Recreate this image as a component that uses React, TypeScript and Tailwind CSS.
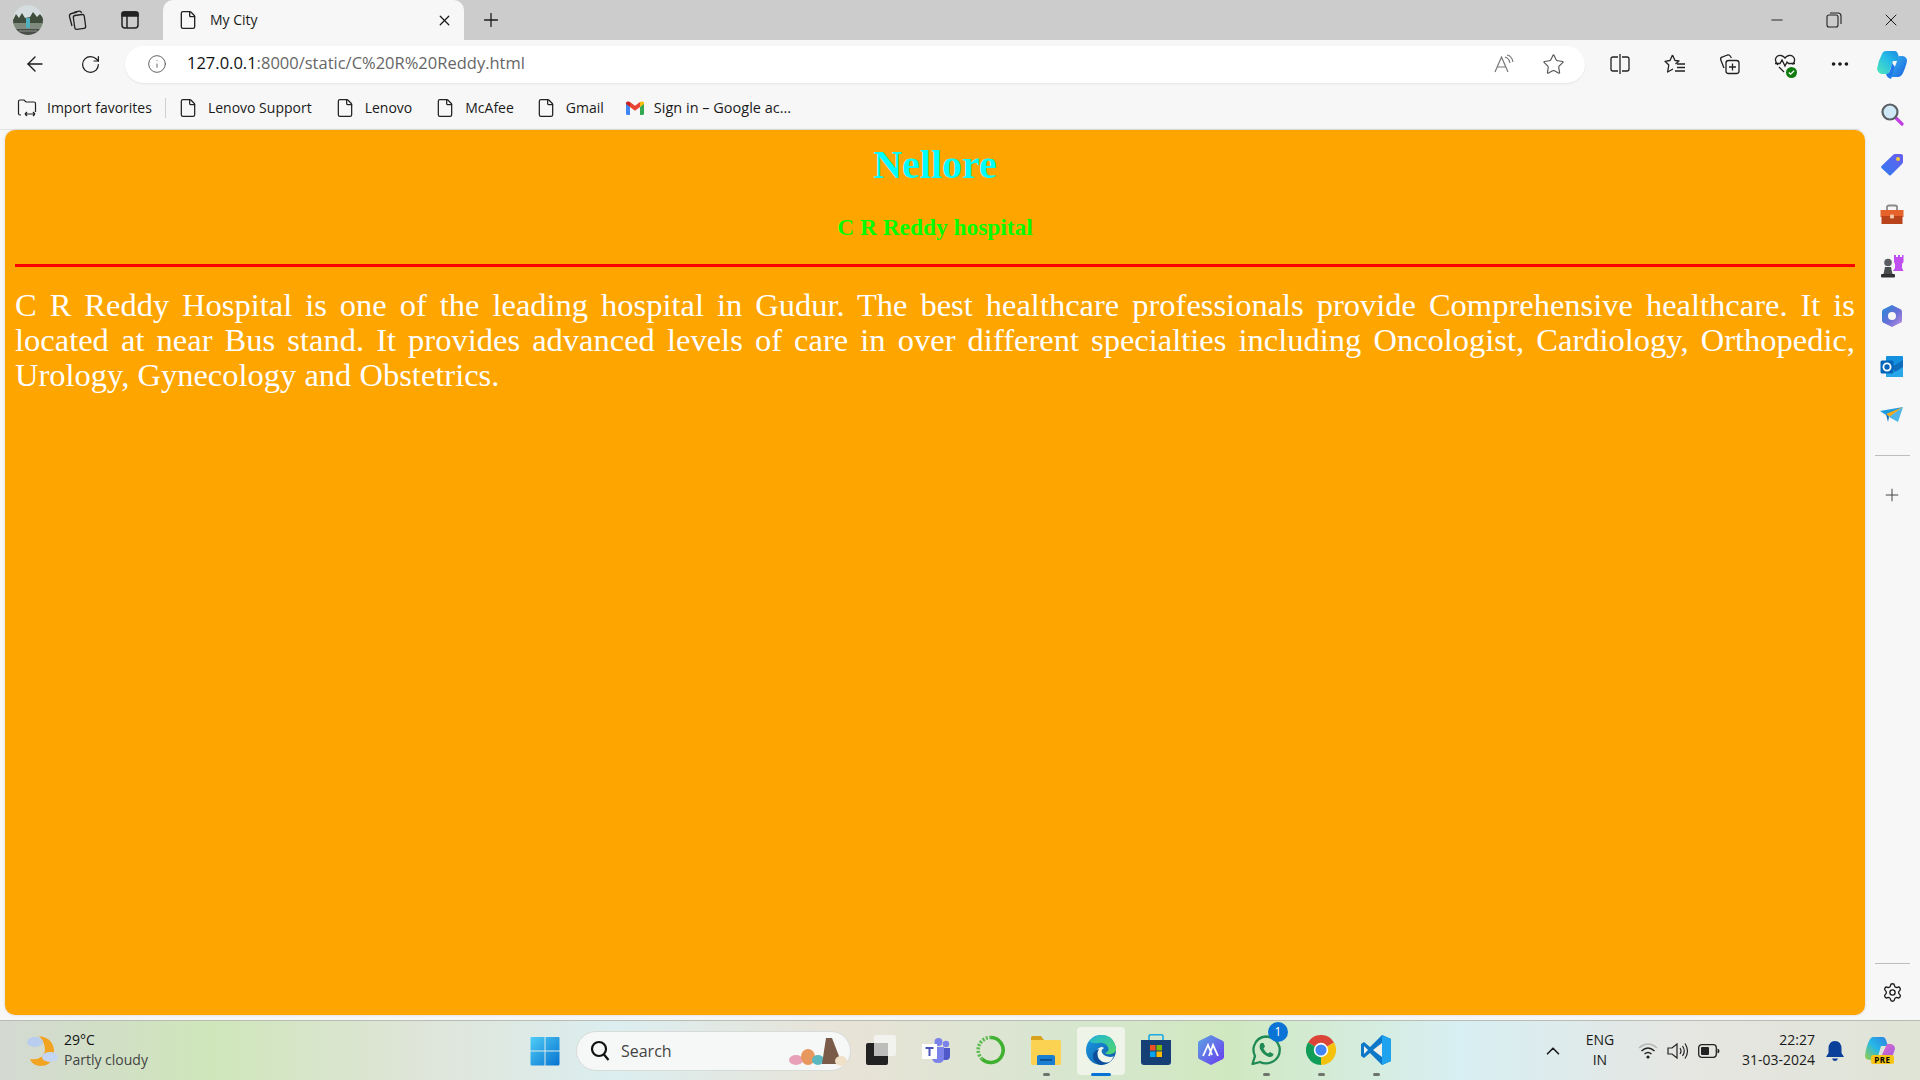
import React from 'react';
import { ArrowLeft, RotateCw, Info, Star, Plus, X, Minus, Ellipsis, File, Settings, ChevronUp } from 'lucide-react';

const sans = "font-['Open_Sans','Noto_Sans',sans-serif]";

const Avatar = () => (
  <svg width="30" height="30" viewBox="0 0 30 30">
    <defs>
      <clipPath id="av"><circle cx="15" cy="15" r="15" /></clipPath>
    </defs>
    <g clipPath="url(#av)">
      <rect width="30" height="30" fill="#d5dcdf" />
      <path d="M0 15 L3 9 L6 13 L9 8 L12 13 L17 12 L20 7 L24 12 L27 9 L30 13 V19 H0Z" fill="#3f4d3c" />
      <rect y="18" width="30" height="12" fill="#7f8a7c" />
      <rect x="13" y="13" width="4" height="10" fill="#4fb0c0" />
      <path d="M0 24 H30 V30 H0Z" fill="#4a4f49" />
      <path d="M6 26 H24" stroke="#8b8f88" strokeWidth="1" />
    </g>
  </svg>
);

const CollectionsIcon = () => (
  <svg width="22" height="22" viewBox="0 0 22 22" fill="none" stroke="#222" strokeWidth="1.3">
    <rect x="8" y="6" width="11" height="14" rx="2" transform="rotate(-8 13 13)" />
    <path d="M6 17 L3.5 7.5 Q3 5 5.5 4.5 L11 3.2" />
    <path d="M8 3.5 L13 2.2 Q15 2 15.6 4" />
  </svg>
);

const TabsIcon = () => (
  <svg width="20" height="20" viewBox="0 0 20 20" fill="none" stroke="#222" strokeWidth="1.5">
    <rect x="2" y="2" width="16" height="16" rx="3" />
    <path d="M2 3.5 Q2 2 4 2 H16 Q18 2 18 3.5 V6 H2Z" fill="#222" />
    <path d="M7 6 V18" />
  </svg>
);

const ImportIcon = () => (
  <svg width="20" height="20" viewBox="0 0 20 20" fill="none" stroke="#222" strokeWidth="1.2">
    <path d="M4 17 H3 Q1.5 17 1.5 15.5 V3.5 Q1.5 2 3 2 H7 L9 4 H17 Q18.5 4 18.5 5.5 V14" />
    <path d="M8 16 H18 M8 16 L10 14 M8 16 L10 18 M18 16 L16 14 M18 16 L16 18" />
  </svg>
);

const ReadAloudIcon = () => (
  <svg width="22" height="22" viewBox="0 0 22 22" fill="none" stroke="#777" strokeWidth="1.2">
    <path d="M2 19 L8.5 4 L15 19 M4.5 14 H12.5" />
    <path d="M12 4 Q16 5 17 10 M14 2 Q19 3 20 9" />
  </svg>
);

const SplitIcon = () => (
  <svg width="20" height="22" viewBox="0 0 20 22" fill="none" stroke="#222" strokeWidth="1.3">
    <path d="M8 4 H3 Q1 4 1 6 V16 Q1 18 3 18 H8" />
    <path d="M12 4 H17 Q19 4 19 6 V16 Q19 18 17 18 H12" />
    <path d="M10 1 V21" />
  </svg>
);

const FavoritesIcon = () => (
  <svg width="22" height="22" viewBox="0 0 22 22" fill="none" stroke="#222" strokeWidth="1.3">
    <path d="M8.5 2 L11 7.5 L15 8 L11.5 11 M8.5 2 L6 7.5 L1 8.3 L4.8 12 L3.6 19 L9 16" strokeLinejoin="round" />
    <path d="M13 11 H21 M13 14.5 H21 M11 18 H21" />
  </svg>
);

const CollectAddIcon = () => (
  <svg width="22" height="22" viewBox="0 0 22 22" fill="none" stroke="#222" strokeWidth="1.3">
    <rect x="7" y="7.5" width="13" height="13" rx="2.5" />
    <path d="M13.5 10.5 V17.5 M10 14 H17" />
    <path d="M5 15 L1.8 7 Q1 5 3 4.2 L8.5 2 Q10.5 1.5 11.5 3.5 L12.5 5" />
  </svg>
);

const HeartIcon = () => (
  <span className="relative block w-[22px] h-[22px]">
    <svg width="22" height="22" viewBox="0 0 22 22" fill="none" stroke="#222" strokeWidth="1.3">
      <path d="M4 12 Q1 9 1.5 6 Q3 2 7 2.5 Q9.5 3 11 5 Q12.5 3 15 2.5 Q19 2 20.5 6 Q21 9 18.5 11.5" />
      <path d="M1 10.5 H6 L8 7 L11 13 L13 9 L14.5 10.5 H21" />
      <path d="M5 14 L10 19" />
    </svg>
    <span className="absolute right-[-1px] bottom-[-3px] w-[11px] h-[11px] rounded-full bg-[#107c10] flex items-center justify-center">
      <svg width="7" height="7" viewBox="0 0 8 8" fill="none" stroke="#fff" strokeWidth="1.4"><path d="M1 4 L3 6 L7 2" /></svg>
    </span>
  </span>
);

const CopilotIcon = () => (
  <svg width="30" height="30" viewBox="0 0 30 30">
    <defs>
      <linearGradient id="cpA" x1="0" y1="0" x2="1" y2="1">
        <stop offset="0" stopColor="#38b8ee" />
        <stop offset="1" stopColor="#1a5fe0" />
      </linearGradient>
      <linearGradient id="cpB" x1="0" y1="1" x2="1" y2="0">
        <stop offset="0" stopColor="#4fe8b8" />
        <stop offset="0.55" stopColor="#26bce8" />
        <stop offset="1" stopColor="#1b86e0" />
      </linearGradient>
    </defs>
    <path d="M9 2 H18 Q20 2 21 5 L23 12 H16 L12 24 Q11 25 8 25 H6 Q1 25 0 20 Q1 12 5 5 Q6 2 9 2Z" fill="url(#cpB)" />
    <path d="M14 28 H21 Q24 28 26 24 Q30 15 30 11 Q29 7 25 7 H22 L14 28Z" fill="url(#cpA)" />
    <path d="M12 24 Q14 20 15 14 L18 18 L14 30 Q10 29 9 25Z" fill="#1f7ae8" />
  </svg>
);

const MagnifierIcon = () => (
  <svg width="24" height="24" viewBox="0 0 24 24">
    <path d="M15 15 L22 22" stroke="#c03fe0" strokeWidth="3.2" strokeLinecap="round" />
    <circle cx="10" cy="10" r="7.5" fill="#cfe8f7" stroke="#5a5f63" strokeWidth="2.2" />
  </svg>
);

const TagIcon = () => (
  <svg width="24" height="24" viewBox="0 0 24 24">
    <defs>
      <linearGradient id="tagG" x1="0" y1="1" x2="1" y2="0">
        <stop offset="0" stopColor="#2f7cf0" />
        <stop offset="1" stopColor="#6a5cf0" />
      </linearGradient>
    </defs>
    <path d="M1.5 13 L13 2 Q14 1 15 1 H21 Q23 1 23 3 V9 Q23 10 22 11 L11 22 Q10 23 9 22 L1.5 15 Q0.5 14 1.5 13Z" fill="url(#tagG)" />
    <circle cx="18" cy="6" r="2" fill="#f4c93a" />
  </svg>
);

const ToolboxIcon = () => (
  <svg width="24" height="22" viewBox="0 0 24 22">
    <path d="M7 6 V3 Q7 1.5 9 1.5 H15 Q17 1.5 17 3 V6" fill="none" stroke="#8a8a8a" strokeWidth="1.8" />
    <rect x="0.5" y="6" width="23" height="7" fill="#e5622b" />
    <rect x="1.5" y="12" width="21" height="8" fill="#b9431a" />
    <rect x="10" y="10.5" width="4" height="4" rx="1" fill="#f2c6a8" />
  </svg>
);

const ChessIcon = () => (
  <svg width="24" height="24" viewBox="0 0 24 24">
    <path d="M14 1 H16 V3 H18 V1 H20 V3 H22 V1 H23.5 V8 L22 10 V14 L23.5 17 H13 L15 14 V10 L14 8Z" fill="#c04ff0" />
    <circle cx="8" cy="8.5" r="3.8" fill="#5b5f63" />
    <path d="M5 13 H11 L12.5 20 H3.5Z" fill="#4a4d50" />
    <rect x="1" y="20" width="14" height="3.5" rx="1" fill="#2f3133" />
  </svg>
);

const M365Icon = () => (
  <svg width="24" height="24" viewBox="0 0 24 24">
    <defs>
      <linearGradient id="m365" x1="0" y1="0" x2="1" y2="1">
        <stop offset="0" stopColor="#1e8ad8" />
        <stop offset="0.55" stopColor="#6a6fd6" />
        <stop offset="1" stopColor="#c090e4" />
      </linearGradient>
    </defs>
    <path d="M12 1 L21 5.5 Q22 6 22 8 V16 Q22 18 21 18.5 L12 23 L3 18.5 Q2 18 2 16 V8 Q2 6 3 5.5Z" fill="url(#m365)" />
    <circle cx="12" cy="12" r="4" fill="#f6f6f6" />
  </svg>
);

const OutlookIcon = () => (
  <svg width="24" height="24" viewBox="0 0 24 24">
    <rect x="6" y="1" width="17" height="21" rx="1" fill="#1490df" />
    <path d="M6 12 H23 V22 H6Z" fill="#28a8ea" />
    <path d="M12 12 L23 5 V12 L15 17Z" fill="#0f6cbd" />
    <rect x="0.5" y="5.5" width="13" height="13" rx="1.5" fill="#0364b8" />
    <circle cx="7" cy="12" r="3.6" fill="none" stroke="#fff" strokeWidth="1.8" />
  </svg>
);

const SendIcon = () => (
  <svg width="24" height="22" viewBox="0 0 24 22">
    <path d="M0 5 L23 1 L9 11Z" fill="#1d9be0" />
    <path d="M6 8 L23 1 L10 11Z" fill="#f2a81f" />
    <path d="M9 11 L23 1 L18 16Z" fill="#4fb6ec" />
    <path d="M6 8 L9 11 L8 16Z" fill="#0f6cbd" />
  </svg>
);

const GmailIcon = () => (
  <svg width="18" height="14" viewBox="0 0 18 14">
    <path d="M0 2 V12.5 Q0 14 1.5 14 H4 V6Z" fill="#4285f4" />
    <path d="M18 2 V12.5 Q18 14 16.5 14 H14 V6Z" fill="#34a853" />
    <path d="M14 1 V6 L18 3 V2 Q18 0 15.5 0.5Z" fill="#fbbc04" />
    <path d="M4 1 V6 L9 9.7 L14 6 V1 L9 4.8Z" fill="#ea4335" />
    <path d="M0 2 V3 L4 6 V1 L2.5 0.5 Q0 0 0 2Z" fill="#c5221f" />
  </svg>
);

const WeatherIcon = () => (
  <svg width="32" height="36" viewBox="0 0 32 36">
    <path d="M12 3 Q27 5 27 19 Q26 33 13 33 Q5 32 3 26 Q15 28 18 18 Q18 9 12 3Z" fill="#f3a322" />
    <ellipse cx="8" cy="9" rx="8" ry="5" fill="#b9cdee" />
    <ellipse cx="23" cy="24" rx="8" ry="5" fill="#c4d6f4" />
  </svg>
);

const WindowsIcon = () => (
  <svg width="30" height="30" viewBox="0 0 30 30">
    <defs>
      <linearGradient id="win" x1="0" y1="0" x2="1" y2="1">
        <stop offset="0" stopColor="#4fcdf7" />
        <stop offset="1" stopColor="#0672d0" />
      </linearGradient>
    </defs>
    <path d="M1 1 H14.5 V14.5 H0.5 V2 Q0.5 1 1 1Z M15.5 1 H29 Q29.5 1 29.5 2 V14.5 H15.5Z M0.5 15.5 H14.5 V29.5 H1.5 Q0.5 29.5 0.5 28Z M15.5 15.5 H29.5 V28 Q29.5 29.5 28 29.5 H15.5Z" fill="url(#win)" />
  </svg>
);

const SearchGlass = () => (
  <svg width="20" height="22" viewBox="0 0 20 22" fill="none" stroke="#111" strokeWidth="2.2">
    <circle cx="9" cy="9" r="7" />
    <path d="M14 14.5 L18.5 20" />
  </svg>
);

const SearchArt = () => (
  <svg width="62" height="32" viewBox="0 0 62 32">
    <ellipse cx="8" cy="25" rx="7" ry="5" fill="#e8a0b8" />
    <ellipse cx="20" cy="22" rx="7" ry="8" fill="#e8975f" />
    <ellipse cx="30" cy="25" rx="6" ry="5" fill="#5cb8c0" />
    <path d="M38 3 L44 3 L54 29 H34Z" fill="#7a5a48" />
    <ellipse cx="53" cy="26" rx="6" ry="5" fill="#f0e0c8" />
  </svg>
);

const TaskViewIcon = () => (
  <svg width="30" height="30" viewBox="0 0 30 30">
    <rect x="0" y="8" width="22" height="22" rx="2" fill="#222" />
    <rect x="8" y="0" width="22" height="21" rx="2" fill="#f4f4f2" opacity="0.85" />
    <rect x="8" y="8" width="14" height="13" fill="#bdbdbb" />
  </svg>
);

const TeamsIcon = () => (
  <svg width="28" height="28" viewBox="0 0 28 28">
    <circle cx="24" cy="8" r="3.2" fill="#7b83eb" />
    <circle cx="16.5" cy="6" r="4" fill="#7b83eb" />
    <path d="M21 12 H28 V20 Q28 24 24 24 H21Z" fill="#5059c9" />
    <path d="M10 11 H22 V22 Q22 27 16 27 Q10 27 10 21Z" fill="#7b83eb" />
    <rect x="0" y="8" width="15" height="15" fill="#fff" />
    <path d="M3.5 11 H11.5 V13 H8.5 V20 H6.5 V13 H3.5Z" fill="#4b53bc" />
  </svg>
);

const RingIcon = () => (
  <svg width="30" height="30" viewBox="0 0 30 30" fill="none">
    <path d="M15 2.5 A12.5 12.5 0 1 1 6 24" stroke="#3fb02f" strokeWidth="3.6" />
    <path d="M6 24 A12.5 12.5 0 0 1 15 2.5" stroke="#5cba4f" strokeWidth="3.6" strokeDasharray="2 1.5" />
  </svg>
);

const ExplorerIcon = () => (
  <svg width="30" height="30" viewBox="0 0 30 30">
    <path d="M0 3 Q0 1 2 1 H10 L13 5 H0Z" fill="#d9a21b" />
    <rect x="0" y="5" width="30" height="25" rx="1.5" fill="#fbd251" />
    <path d="M6 30 V22 Q6 20 8 20 H22 Q24 20 24 22 V30Z" fill="#1a7fd0" />
    <rect x="9" y="24" width="12" height="1.8" fill="#0b4f8f" />
  </svg>
);

const EdgeIcon = () => (
  <svg width="30" height="30" viewBox="0 0 30 30">
    <defs>
      <linearGradient id="edgeA" x1="0" y1="0" x2="1" y2="1">
        <stop offset="0" stopColor="#1fb5d8" />
        <stop offset="1" stopColor="#53d86a" />
      </linearGradient>
      <linearGradient id="edgeB" x1="0" y1="0" x2="1" y2="1">
        <stop offset="0" stopColor="#1b9de2" />
        <stop offset="1" stopColor="#0f55a8" />
      </linearGradient>
    </defs>
    <circle cx="15" cy="15" r="15" fill="url(#edgeB)" />
    <path d="M3 6 Q9 0 16 0 Q28 0 30 14 Q30 18 25 19 Q21 20 19 18 Q24 16 22 12 Q19 7 12 8 Q6 9 3 6Z" fill="url(#edgeA)" />
    <path d="M13 13 Q16 11 18 13 Q16 14 15.5 16 Q16 21 24 22 Q27 22 28 21 Q24 30 14 29 Q9 27 9 20 Q9 16 13 13Z" fill="#f1f6ea" />
    <path d="M13 14 Q10 19 13 24 Q17 29 24 27 Q20 30 15 30 Q6 28 7 19 Q9 15 13 14Z" fill="#0c4f9c" />
  </svg>
);

const StoreIcon = () => (
  <svg width="30" height="32" viewBox="0 0 30 32">
    <path d="M8 6 V2 Q8 0.8 9.5 0.8 H20.5 Q22 0.8 22 2 V6" fill="none" stroke="#1fa8e0" strokeWidth="1.6" />
    <path d="M0 6 H30 V28 Q30 31 27 31 H3 Q0 31 0 28Z" fill="#163f75" />
    <rect x="9" y="11" width="5.5" height="5.5" fill="#f25022" />
    <rect x="15.5" y="11" width="5.5" height="5.5" fill="#7fba00" />
    <rect x="9" y="17.5" width="5.5" height="5.5" fill="#00a4ef" />
    <rect x="15.5" y="17.5" width="5.5" height="5.5" fill="#ffb900" />
  </svg>
);

const HexIcon = () => (
  <svg width="30" height="30" viewBox="0 0 30 30">
    <defs>
      <linearGradient id="hexG" x1="0" y1="0" x2="1" y2="1">
        <stop offset="0" stopColor="#5ba4e0" />
        <stop offset="1" stopColor="#6a3bf0" />
      </linearGradient>
    </defs>
    <path d="M15 0 L27 6 Q28 7 28 8 V22 Q28 23 27 24 L15 30 L3 24 Q2 23 2 22 V8 Q2 7 3 6Z" fill="url(#hexG)" />
    <path d="M7 21 L12 10 L16 20 M13 21 L17 10 L22 21" fill="none" stroke="#fff" strokeWidth="1.8" />
  </svg>
);

const WhatsappIcon = () => (
  <svg width="30" height="30" viewBox="0 0 30 30" fill="none">
    <path d="M1.5 29 L4 21 Q1.5 16 3 11 Q6 2 15 1.5 Q25 2 28.5 12 Q30 22 22 26.5 Q15 30 9 27 Z" stroke="#1f8a55" strokeWidth="2.3" strokeLinejoin="round" />
    <path d="M10 8 Q8 10 9 14 Q12 20 18 22 Q22 22.5 22.5 19 L19 17 L17 18.5 Q14 17 12.5 13.5 L14 11.5 L12.5 8Z" fill="#1f8a55" />
  </svg>
);

const ChromeIcon = () => (
  <svg width="30" height="30" viewBox="0 0 30 30">
    <path d="M15 15 L2 7.5 A15 15 0 0 1 28 7.5Z" fill="#db4437" />
    <path d="M15 15 L28 7.5 A15 15 0 0 1 15 30Z" fill="#f4c20d" />
    <path d="M15 15 L15 30 A15 15 0 0 1 2 7.5Z" fill="#0f9d58" />
    <circle cx="15" cy="15" r="7.2" fill="#fff" />
    <circle cx="15" cy="15" r="5.6" fill="#4285f4" />
  </svg>
);

const VscodeIcon = () => (
  <svg width="30" height="30" viewBox="0 0 30 30">
    <path d="M21 0 L30 4 V26 L21 30 L9 18 L3 23 L0 21 V9 L3 7 L9 12Z" fill="#0e78c8" />
    <path d="M21 0 L30 4 V26 L21 30Z" fill="#1fa3ef" />
    <path d="M21 8 L12 15 L21 22Z" fill="#f1f1ec" />
    <path d="M3 11 L7 15 L3 19Z" fill="#f1f1ec" />
  </svg>
);

const SpeakerIcon = () => (
  <svg width="22" height="20" viewBox="0 0 22 20" fill="none" stroke="#222" strokeWidth="1.2">
    <path d="M1 7 H5 L10 3 V17 L5 13 H1Z" />
    <path d="M13 7 Q15 10 13 13 M15.5 5 Q19 10 15.5 15 M18 2.5 Q23 10 18 17.5" />
  </svg>
);

const WifiIcon = () => (
  <svg width="20" height="18" viewBox="0 0 20 18" fill="none" strokeWidth="1.4">
    <path d="M1 6 Q10 -2 19 6" stroke="#b5b5b5" />
    <path d="M3.5 9 Q10 3 16.5 9 M6.5 12 Q10 9 13.5 12" stroke="#222" />
    <circle cx="10" cy="15" r="1.6" fill="#222" />
  </svg>
);

const BatteryIcon = () => (
  <svg width="22" height="14" viewBox="0 0 22 14">
    <rect x="0.7" y="0.7" width="17.6" height="12.6" rx="3" fill="none" stroke="#222" strokeWidth="1.3" />
    <rect x="3" y="3" width="8" height="8" rx="1" fill="#222" />
    <path d="M19.5 4.5 Q21.5 5 21.5 7 Q21.5 9 19.5 9.5Z" fill="#222" />
  </svg>
);

const BellIcon = () => (
  <svg width="18" height="20" viewBox="0 0 18 20">
    <path d="M9 0 Q15.5 0 15.5 8 V12 L18 16 H0 L2.5 12 V8 Q2.5 0 9 0Z" fill="#0a3f9a" />
    <path d="M6 17.5 H12 Q11 20 9 20 Q7 20 6 17.5Z" fill="#0a3f9a" />
  </svg>
);

const CopilotPre = () => (
  <span className="relative block w-[30px] h-[30px]">
    <svg width="30" height="30" viewBox="0 0 30 30">
      <defs>
        <linearGradient id="cpP" x1="0" y1="1" x2="1" y2="0">
          <stop offset="0" stopColor="#9bd03f" />
          <stop offset="0.5" stopColor="#25b7e8" />
          <stop offset="1" stopColor="#2f7fe0" />
        </linearGradient>
        <linearGradient id="cpQ" x1="0" y1="0" x2="1" y2="1">
          <stop offset="0" stopColor="#e86ac8" />
          <stop offset="1" stopColor="#9a5ce8" />
        </linearGradient>
      </defs>
      <path d="M8 1 H18 Q20 1 21 4 L23 10 H16 L12 24 H6 Q0 24 0 20 Q1 11 4 5 Q6 1 8 1Z" fill="url(#cpP)" />
      <path d="M22 8 H26 Q30 9 30 13 Q28 20 25 25 H14Z" fill="url(#cpQ)" />
    </svg>
    <span className={`absolute left-[6px] top-[19px] w-[23px] h-[9px] rounded-[2px] bg-[#f5c518] text-[8px] leading-[9px] font-bold text-center text-black tracking-[0.5px] ${sans}`}>PRE</span>
  </span>
);

const favorites = [
  { label: 'Lenovo Support', gap: 'mr-[23px]' },
  { label: 'Lenovo', gap: 'mr-[23px]' },
  { label: 'McAfee', gap: 'mr-[22px]' },
  { label: 'Gmail', gap: 'mr-[22px]' },
];

const sideIcons = [
  <MagnifierIcon key="s" />,
  <TagIcon key="t" />,
  <ToolboxIcon key="b" />,
  <ChessIcon key="c" />,
  <M365Icon key="m" />,
  <OutlookIcon key="o" />,
  <SendIcon key="p" />,
];

const taskApps = [
  { el: <TaskViewIcon />, dot: false },
  { el: <TeamsIcon />, dot: false },
  { el: <RingIcon />, dot: false },
  { el: <ExplorerIcon />, dot: true },
  { el: <EdgeIcon />, active: true },
  { el: <StoreIcon />, dot: false },
  { el: <HexIcon />, dot: false },
  { el: <WhatsappIcon />, dot: true, badge: '1' },
  { el: <ChromeIcon />, dot: true },
  { el: <VscodeIcon />, dot: true },
];

export default function App() {
  return (
    <div className={`w-[1920px] h-[1080px] overflow-hidden flex flex-col bg-[#f7f7f7] text-[#1a1a1a] ${sans}`}>
      {/* Tab strip */}
      <div className="h-[40px] shrink-0 bg-[#cccccc] flex items-center">
        <div className="w-[56px] flex justify-center"><Avatar /></div>
        <div className="w-[53px] flex justify-center -ml-[6px]"><CollectionsIcon /></div>
        <div className="w-[53px] flex justify-center"><TabsIcon /></div>
        <div className="ml-[7px] w-[301px] h-[40px] bg-[#f7f7f7] rounded-t-[10px] flex items-center pl-[15px] pr-[11px]">
          <File size={20} strokeWidth={1.6} className="text-[#222]" />
          <span className="ml-[12px] text-[14px] flex-1 pb-[2px]">My City</span>
          <X size={17} strokeWidth={1.8} />
        </div>
        <Plus size={22} strokeWidth={1.4} className="ml-[16px]" />
        <div className="flex-1" />
        <Minus size={18} strokeWidth={1.2} />
        <svg width="16" height="16" viewBox="0 0 16 16" fill="none" stroke="#222" strokeWidth="1.1" className="ml-[40px]">
          <rect x="1" y="3" width="11" height="12" rx="2" />
          <path d="M4 1 H12 Q15 1 15 4 V12" />
        </svg>
        <X size={20} strokeWidth={1.2} className="ml-[39px] mr-[19px]" />
      </div>

      {/* Address row */}
      <div className="h-[48px] shrink-0 flex items-center">
        <ArrowLeft size={24} strokeWidth={1.4} className="ml-[23px]" />
        <RotateCw size={21} strokeWidth={1.4} className="ml-[33px]" />
        <div className="ml-[24px] w-[1460px] h-[37px] rounded-full bg-white shadow-[0_1px_2px_rgba(0,0,0,0.08)] flex items-center">
          <Info size={20} strokeWidth={1.1} className="ml-[22px] text-[#555]" />
          <span className="ml-[20px] text-[16.5px] flex-1 pb-[1px]">
            <span className="text-[#111]">127.0.0.1</span>
            <span className="text-[#666]">:8000/static/C%20R%20Reddy.html</span>
          </span>
          <ReadAloudIcon />
          <Star size={23} strokeWidth={1.2} className="ml-[27px] mr-[20px] text-[#555]" />
        </div>
        <div className="w-[55px] ml-[7px] flex justify-center"><SplitIcon /></div>
        <div className="w-[55px] flex justify-center"><FavoritesIcon /></div>
        <div className="w-[55px] flex justify-center"><CollectAddIcon /></div>
        <div className="w-[55px] flex justify-center"><HeartIcon /></div>
        <div className="w-[55px] flex justify-center"><Ellipsis size={22} strokeWidth={2} /></div>
        <div className="w-[50px] flex justify-center"><CopilotIcon /></div>
      </div>

      {/* Favorites bar, page and side rail */}
      <div className="flex-1 min-h-0 flex">
        <div className="flex-1 min-w-0 flex flex-col">
          <div className="h-[42px] shrink-0 flex items-center text-[14px] border-b border-[#e4e4e4] mr-[5px] pl-[17px] pb-[2px]">
            <ImportIcon />
            <span className="ml-[10px]">Import favorites</span>
            <span className="w-px h-[20px] bg-[#cfcfcf] ml-[13px] mr-[12px]" />
            {favorites.map(f => (
              <span key={f.label} className={`flex items-center ${f.gap}`}>
                <File size={20} strokeWidth={1.5} className="text-[#222]" />
                <span className="ml-[10px]">{f.label}</span>
              </span>
            ))}
            <GmailIcon />
            <span className="ml-[10px] text-[14.5px]">Sign in – Google ac...</span>
          </div>
          <div className="flex-1 min-h-0 pl-[5px] pb-[5px]">
            <div className="h-full bg-[#ffa500] rounded-[10px] shadow-[0_0_3px_rgba(0,0,0,0.15)] px-[10px] pt-[12px] font-['Liberation_Serif',serif]">
              <h1 className="text-[40px] font-bold text-center text-[#00ffff] leading-[46px] mb-[26px]">Nellore</h1>
              <h3 className="text-[23.4px] font-bold text-center text-[#00ff00] leading-[27px] mb-[23px]">C R Reddy hospital</h3>
              <hr className="h-[3px] bg-[#ff0000] border-0" />
              <p className="mt-[21px] text-[32.5px] leading-[35px] text-white text-justify">
                C R Reddy Hospital is one of the leading hospital in Gudur. The best healthcare professionals provide Comprehensive healthcare. It is located at near Bus stand. It provides advanced levels of care in over different specialties including Oncologist, Cardiology, Orthopedic, Urology, Gynecology and Obstetrics.
              </p>
            </div>
          </div>
        </div>

        <div className="w-[55px] shrink-0 flex flex-col items-center pt-[1px] pb-[5px] pr-[1px]">
          {sideIcons.map((ic, i) => (
            <div key={i} className="h-[50.5px] flex items-center justify-center">{ic}</div>
          ))}
          <div className="w-[35px] h-px bg-[#bdbdbd] mt-[12px]" />
          <Plus size={20} strokeWidth={1.2} className="mt-[29px] text-[#444]" />
          <div className="flex-1" />
          <div className="w-[35px] h-px bg-[#bdbdbd]" />
          <Settings size={21} strokeWidth={1.5} className="mt-[18px] mb-[12px]" />
        </div>
      </div>

      {/* Windows taskbar */}
      <div className="h-[60px] shrink-0 border-t border-[#b8bdb4] flex items-center bg-[linear-gradient(90deg,#d4d9d2_0%,#cfe6ba_11%,#dfe5d9_22%,#dceef0_32%,#e8e3d7_44%,#d8e6d0_55%,#d0e8c0_64%,#d8eff3_76%,#e6e6e2_88%,#dfe4d6_100%)]">
        <div className="ml-[27px]"><WeatherIcon /></div>
        <div className="ml-[5px] text-[14px] leading-[20px] pb-[2px]">
          <div className="text-[#111]">29°C</div>
          <div className="text-[#444]">Partly cloudy</div>
        </div>
        <div className="ml-[370px] w-[55px] flex justify-center"><WindowsIcon /></div>
        <div className="ml-[3px] w-[275px] h-[40px] rounded-full bg-[#f6f8f7] border border-[#d7dcd8] flex items-center pl-[13px]">
          <SearchGlass />
          <span className="ml-[11px] text-[16px] text-[#444] flex-1">Search</span>
          <SearchArt />
        </div>
        <div className="ml-[3px] flex">
          {taskApps.map((a, i) => (
            <div key={i} className="relative w-[55px] h-[48px] flex items-center justify-center">
              {a.active && <div className="absolute left-[3px] top-0 w-[48px] h-[48px] rounded-[4px] bg-[#eef4e8]" />}
              <div className="relative -mt-[1px]">{a.el}</div>
              {a.badge && (
                <span className="absolute left-[29px] top-[-5px] w-[20px] h-[20px] rounded-full bg-[#0a74d6] text-white text-[12px] leading-[20px] text-center">{a.badge}</span>
              )}
              {a.dot && <span className="absolute left-[24px] bottom-[-1px] w-[7px] h-[3px] rounded-full bg-[#6f736e]" />}
              {a.active && <span className="absolute left-[17px] bottom-[-1px] w-[20px] h-[3px] rounded-full bg-[#0a74d6]" />}
            </div>
          ))}
        </div>
        <ChevronUp size={22} strokeWidth={1.8} className="ml-[138px]" />
        <div className="ml-[11px] w-[50px] text-center text-[14px] leading-[20px] pb-[2px]">
          <div>ENG</div>
          <div>IN</div>
        </div>
        <div className="ml-[13px]"><WifiIcon /></div>
        <div className="ml-[9px]"><SpeakerIcon /></div>
        <div className="ml-[9px]"><BatteryIcon /></div>
        <div className="ml-[6px] w-[89px] text-right text-[14px] leading-[20px] pb-[2px]">
          <div>22:27</div>
          <div>31-03-2024</div>
        </div>
        <div className="ml-[11px]"><BellIcon /></div>
        <div className="ml-[21px]"><CopilotPre /></div>
      </div>
    </div>
  );
}
